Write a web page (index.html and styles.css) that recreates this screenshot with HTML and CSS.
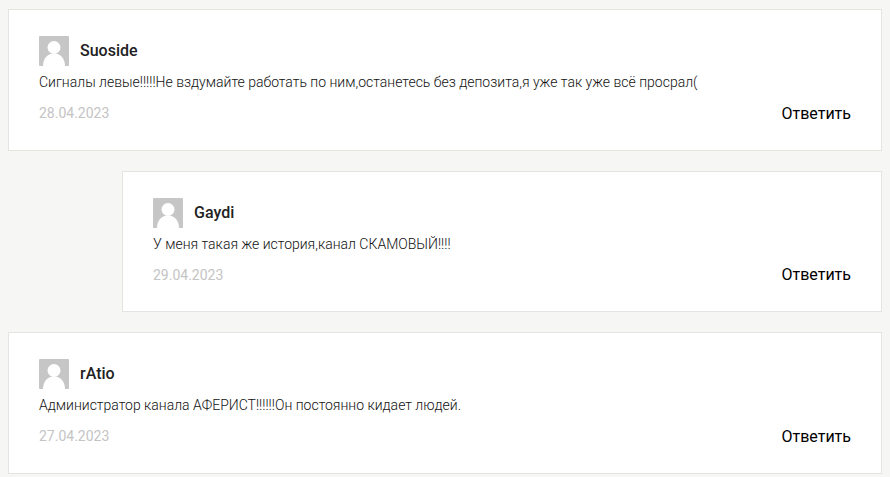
FILE: index.html
```html
<!DOCTYPE html>
<html lang="ru">
<head>
<meta charset="utf-8">
<title>Комментарии</title>
<link rel="stylesheet" href="styles.css">
</head>
<body>
<div class="comments">
  <article class="comment">
    <header class="author">
      <svg class="avatar" viewBox="0 0 30 30"><rect width="30" height="30" rx="1" fill="#c6c6c6"/><circle cx="15" cy="11.5" r="6.5" fill="#fff"/><path d="M4 30c0-8 5-12.5 11-12.5s11 4.500 11 12.500z" fill="#fff"/></svg>
      <span class="name">Suoside</span>
    </header>
    <p class="text">Сигналы левые!!!!!Не вздумайте работать по ним,останетесь без депозита,я уже так уже всё просрал(</p>
    <footer class="meta"><span class="date">28.04.2023</span><a class="reply">Ответить</a></footer>
  </article>
  <article class="comment nested">
    <header class="author">
      <svg class="avatar" viewBox="0 0 30 30"><rect width="30" height="30" rx="1" fill="#c6c6c6"/><circle cx="15" cy="11.5" r="6.5" fill="#fff"/><path d="M4 30c0-8 5-12.5 11-12.5s11 4.500 11 12.500z" fill="#fff"/></svg>
      <span class="name">Gaydi</span>
    </header>
    <p class="text">У меня такая же история,канал СКАМОВЫЙ!!!!</p>
    <footer class="meta"><span class="date">29.04.2023</span><a class="reply">Ответить</a></footer>
  </article>
  <article class="comment">
    <header class="author">
      <svg class="avatar" viewBox="0 0 30 30"><rect width="30" height="30" rx="1" fill="#c6c6c6"/><circle cx="15" cy="11.5" r="6.5" fill="#fff"/><path d="M4 30c0-8 5-12.5 11-12.5s11 4.500 11 12.500z" fill="#fff"/></svg>
      <span class="name">rAtio</span>
    </header>
    <p class="text">Администратор канала АФЕРИСТ!!!!!!Он постоянно кидает людей.</p>
    <footer class="meta"><span class="date">27.04.2023</span><a class="reply">Ответить</a></footer>
  </article>
</div>
</body>
</html>
```
FILE: styles.css
```css
html, body {
  margin: 0;
  padding: 0;
  background: #f6f6f4;
  overflow: hidden;
}
body {
  font-family: Roboto, "Liberation Sans", sans-serif;
  color: #222;
}
.comments {
  display: flex;
  flex-direction: column;
  gap: 20px;
  padding: 9px 8px 0;
}
.comment {
  box-sizing: border-box;
  height: 141.500px;
  padding: 26px 30px 0;
  background: #fff;
  border: 1px solid #e4e4e0;
}
.nested {
  margin-left: 114px;
}
.author {
  display: flex;
  align-items: center;
  gap: 11px;
  height: 30px;
}
.avatar {
  display: block;
  width: 30px;
  height: 30px;
}
.name {
  font-size: 16px;
  font-weight: 500;
  position: relative;
  top: -0.5px;
}
.text {
  margin: 6px 0 0;
  font-size: 14px;
  line-height: 20px;
  font-weight: 300;
  color: #111;
}
.meta {
  display: flex;
  justify-content: space-between;
  align-items: center;
  margin-top: 11px;
  height: 20px;
}
.date {
  font-size: 14px;
  color: #c4c4c4;
}
.reply {
  font-size: 16px;
  color: #000;
}
```
